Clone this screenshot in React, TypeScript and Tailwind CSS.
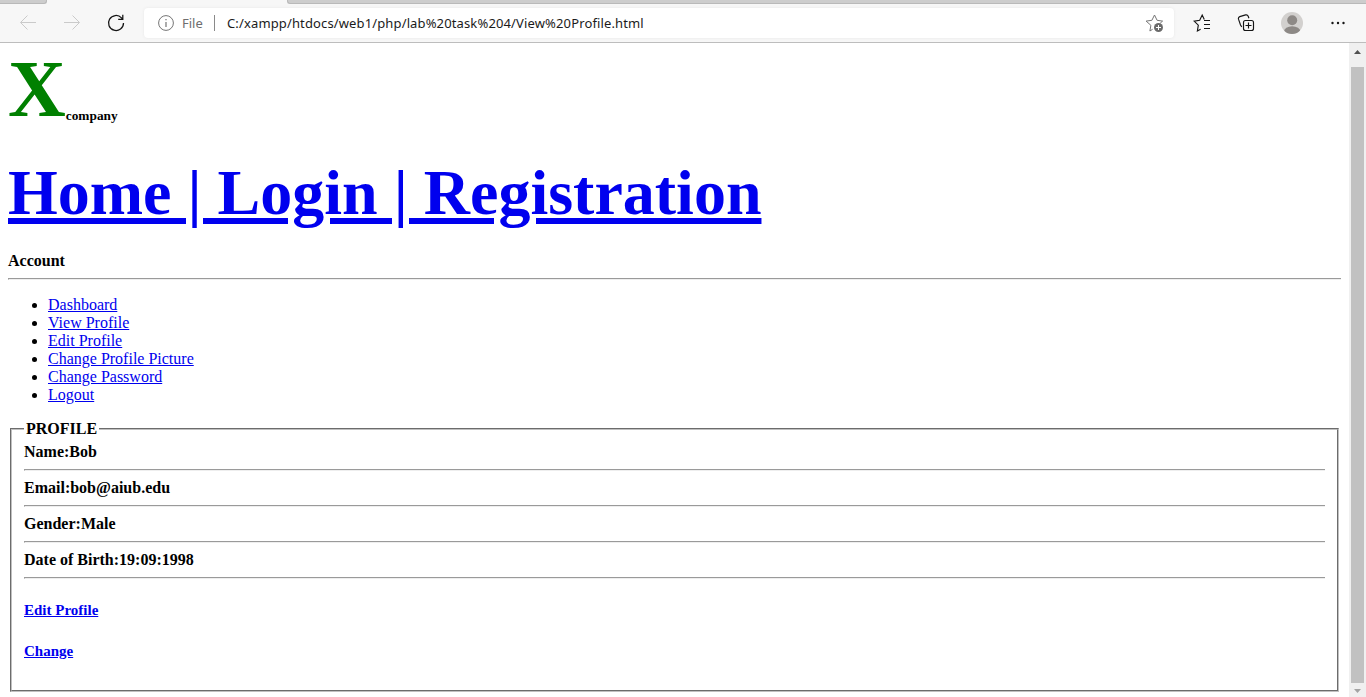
import React from "react";

const menu = ["Dashboard", "View Profile", "Edit Profile", "Change Profile Picture", "Change Password", "Logout"];
const details = ["Name:Bob", "Email:bob@aiub.edu", "Gender:Male", "Date of Birth:19:09:1998"];

const STAR = "M7.6 16.3 4.9 18 5.9 12.3 1.1 8.1 6.9 7.3 9.5 2 12.1 7.3 17.6 8.1 15.2 10.2";

function Rule() {
  return <div className="my-2 h-[2px] border-t border-b border-l border-t-[#9a9a9a] border-l-[#9a9a9a] border-b-[#eeeeee]" />;
}

function TabStrip() {
  return (
    <div className="flex h-1 justify-between">
      <div className="w-[47px] rounded-br-[3px] border-b border-r border-[#b9b9b9] bg-[#cdcdcd]" />
      <div className="w-[1079px] rounded-bl-[3px] border-b border-l border-[#b9b9b9] bg-[#cdcdcd]" />
    </div>
  );
}

function Toolbar() {
  return (
    <div className="flex h-[38px] items-center">
      <svg className="ml-5 h-4 w-4" viewBox="0 0 16 16" fill="none" stroke="#cacaca">
        <path d="M16 7.5H.8M7.5.5.5 7.5 7.5 14.5" />
      </svg>
      <svg className="ml-7 h-4 w-4" viewBox="0 0 16 16" fill="none" stroke="#cacaca">
        <path d="M0 7.5h15.2M8.5.5 15.5 7.5 8.5 14.5" />
      </svg>
      <svg className="ml-7 h-4 w-4 overflow-visible" viewBox="0 0 16 16" fill="none" stroke="#151515" strokeWidth="1.25">
        <path d="M15.5 8a7.5 7.5 0 1 1-2-5.1l1.1 1.2M14.8-.2v4.5h-4.6" />
      </svg>
      <div className="ml-5 flex h-[30px] w-[1030px] items-center rounded bg-white font-['Noto_Sans','Open_Sans',sans-serif] text-[13px] shadow-[0_0_3px_#e6e6e6]">
        <svg className="ml-[14px] h-4 w-4" viewBox="0 0 16 16" fill="none" stroke="#757575">
          <circle cx="8" cy="8" r="7.4" />
          <path d="M8 7v5M8 4v1.3" strokeWidth="1.2" />
        </svg>
        <span className="ml-2 w-[22px] pt-[2px] whitespace-nowrap text-[#6e6e6e]">File</span>
        <span className="ml-[10px] h-4 w-px bg-[#8a8a8a]" />
        <span className="ml-3 pt-[2px] tracking-[0.135px] whitespace-nowrap text-[#1b1b1b]">C:/xampp/htdocs/web1/php/lab%20task%204/View%20Profile.html</span>
        <svg className="mr-[10px] ml-auto h-5 w-[19px]" viewBox="0 0 19 20" fill="none" stroke="#767676">
          <path d={STAR} />
          <circle cx="13.5" cy="14.5" r="4.5" fill="#6b6b6b" stroke="none" />
          <path d="M13.5 12v5M11 14.5h5" stroke="#fff" />
        </svg>
      </div>
      <svg className="ml-[19px] h-5 w-[19px]" viewBox="0 0 19 20" fill="none" stroke="#151515" strokeWidth="1.15">
        <path d="M7.6 16.3 4.4 17.9 5.3 12.2 1.1 8.1 6.7 7.3 9.2 2 11.3 6.5M11 7.5h6M11 11.5h6M11 15.5h6" />
      </svg>
      <svg className="ml-[25px] h-[18px] w-[18px]" viewBox="0 0 18 18" fill="none" stroke="#151515" strokeWidth="1.15">
        <rect x="6.5" y="6.5" width="10" height="10" rx="2" />
        <path d="M11.5 8.5v6M8.5 11.5h6M4.8 12.8 3.5 11 1.5 5.2Q1 3.3 2.8 2.6L8.6.9Q10.5.4 11.2 2.2l.7 2" />
      </svg>
      <svg className="ml-[26px] h-[22px] w-[22px]" viewBox="0 0 22 22">
        <defs><clipPath id="avatar"><circle cx="11" cy="11" r="11" /></clipPath></defs>
        <g clipPath="url(#avatar)">
          <rect width="22" height="22" fill="#d2d0ce" />
          <circle cx="11.2" cy="8.3" r="5" fill="#8d8986" />
          <ellipse cx="11.2" cy="19.5" rx="8.2" ry="5.2" fill="#8d8986" />
        </g>
      </svg>
      <svg className="ml-7 h-[4px] w-[14px]" viewBox="0 0 14 4" fill="#151515">
        <circle cx="1.5" cy="2" r="1.2" /><circle cx="7" cy="2" r="1.2" /><circle cx="12.5" cy="2" r="1.2" />
      </svg>
    </div>
  );
}

function Scrollbar() {
  return (
    <div className="flex w-[17px] shrink-0 flex-col items-center bg-[#f0f0f0]">
      <svg className="h-6 w-[17px] shrink-0" viewBox="0 0 17 24" fill="#505050"><path d="M5 11h7L8.5 7z" /></svg>
      <div className="w-[13px] grow bg-[#c1c1c1]" />
      <svg className="h-[14px] w-[17px] shrink-0" viewBox="0 0 17 14" fill="#a3a3a3"><path d="M5 6h7L8.5 10z" /></svg>
    </div>
  );
}

export default function App() {
  return (
    <div className="flex h-[697px] w-[1366px] flex-col overflow-hidden bg-white">
      <header className="h-[43px] shrink-0 border-b border-[#bdbdbd] bg-[#f7f7f7]">
        <TabStrip />
        <Toolbar />
      </header>
      <div className="flex min-h-0 grow">
        <main className="grow px-2 pt-[6px] font-['Liberation_Serif',serif] text-base leading-[18px] text-black">
          <div className="h-20 text-[80px] leading-[80px] font-bold whitespace-nowrap text-[#008000]">
            X<span className="align-[-4px] text-[13.33px] leading-none text-black">company</span>
          </div>
          <h1 className="mt-8 text-[64px] leading-[64px] font-bold whitespace-nowrap">
            <a href="#" className="text-[#0000ee] underline">Home | Login | Registration</a>
          </h1>
          <div className="mt-[27px] font-bold">Account</div>
          <Rule />
          <ul className="mt-4 list-disc pl-10">
            {menu.map((m) => (
              <li key={m}><a href="#" className="text-[#0000ee] underline">{m}</a></li>
            ))}
          </ul>
          <fieldset className="mx-[2px] mt-4 h-[272px] border-2 border-[#c0c0c0] px-3 pt-[5px] font-bold [border-style:groove]">
            <legend className="px-[2px]">PROFILE</legend>
            {details.map((d) => (
              <div key={d}>{d}<Rule /></div>
            ))}
            <div className="mt-[23px] text-[15px] leading-[17px]"><a href="#" className="text-[#0000ee] underline">Edit Profile</a></div>
            <div className="mt-6 text-[15px] leading-[17px]"><a href="#" className="text-[#0000ee] underline">Change</a></div>
          </fieldset>
        </main>
        <Scrollbar />
      </div>
    </div>
  );
}
